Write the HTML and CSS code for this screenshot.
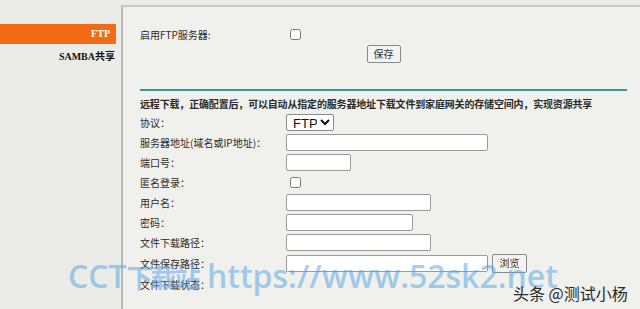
FILE: index.html
```html
<!DOCTYPE html>
<html lang="zh-CN">
<head>
<meta charset="utf-8">
<title>FTP</title>
<link rel="stylesheet" href="styles.css">
</head>
<body>
<div class="page">
  <nav class="sidebar">
    <div class="nav-item active">FTP</div>
    <div class="nav-item">SAMBA共享</div>
  </nav>
  <main class="panel">
    <section class="top">
      <div class="row">
        <span class="label">启用FTP服务器:</span>
        <input type="checkbox" class="check">
      </div>
      <div class="save-row"><button class="btn">保存</button></div>
    </section>
    <hr class="rule">
    <p class="heading">远程下载，正确配置后，可以自动从指定的服务器地址下载文件到家庭网关的存储空间内，实现资源共享</p>
    <div class="form">
      <div class="row"><span class="label">协议：</span><select class="select"><option>FTP</option></select></div>
      <div class="row"><span class="label">服务器地址(域名或IP地址)：</span><input class="text w202" type="text"></div>
      <div class="row"><span class="label">端口号：</span><input class="text w65" type="text"></div>
      <div class="row"><span class="label">匿名登录：</span><input type="checkbox" class="check"></div>
      <div class="row"><span class="label">用户名：</span><input class="text w145" type="text"></div>
      <div class="row"><span class="label">密码：</span><input class="text w127" type="text"></div>
      <div class="row"><span class="label">文件下载路径：</span><input class="text w145" type="text"></div>
      <div class="row tall"><span class="label">文件保存路径：</span><input class="text w202" type="text"><button class="btn browse">浏览</button></div>
      <div class="row"><span class="label">文件下载状态：</span></div>
    </div>
  </main>
</div>
<div class="watermark">CCT<span class="wm-cjk">下载站</span> https://www.52sk2.net</div>
<div class="credit">头条 @测试小杨</div>
</body>
</html>
```

FILE: styles.css
```css
* { box-sizing: border-box; }
html, body { margin: 0; padding: 0; }
body {
  background: #ebebe7;
  font-family: "Noto Sans CJK SC", sans-serif;
  font-size: 10px;
  color: #2a2a2a;
  width: 640px;
  height: 309px;
  overflow: hidden;
  position: relative;
}
.page {
  display: flex;
  height: 309px;
}
.sidebar {
  width: 121px;
  flex: none;
  padding-top: 24px;
}
.nav-item {
  width: 116px;
  height: 20px;
  line-height: 20px;
  text-align: right;
  padding-right: 1px;
  font-family: "Liberation Serif", "Noto Sans CJK SC", serif;
  font-weight: bold;
  font-size: 10px;
  color: #111;
}
.nav-item + .nav-item { margin-top: 3px; }
.nav-item.active {
  background: #f36b12;
  color: #fff;
  padding-right: 6px;
}
.panel {
  flex: 1;
  margin-top: 5px;
  background: #f0f0ec;
  border-left: 2px solid #b9b9b5;
  border-top: 2px solid #c9c9c5;
  padding: 17px 13px 0 17px;
}
.row {
  display: flex;
  align-items: center;
  height: 20px;
}
.row.tall { height: 22px; }
.label {
  width: 146px;
  flex: none;
  white-space: nowrap;
}
.check {
  width: 11px;
  height: 11px;
  margin: 0 0 0 4px;
}
.save-row {
  display: flex;
  justify-content: center;
  margin-top: 1px;
}
.btn {
  font-family: "Noto Sans CJK SC", sans-serif;
  font-size: 10px;
  height: 18px;
  padding: 0 6px;
  background: #f3f3f1;
  border: 1px solid #8a8a8a;
  border-radius: 2px;
  color: #333;
  line-height: 14px;
}
.rule {
  margin: 26px 0 0 0;
  border: 0;
  height: 2px;
  background: #3a9c99;
}
.heading {
  margin: 5px 0 0 0;
  line-height: 16px;
  font-weight: bold;
  white-space: nowrap;
  letter-spacing: -0.17px;
}
.select {
  width: 48px;
  height: 17px;
  font-family: "Liberation Sans", sans-serif;
  font-size: 13px;
  padding: 0 0 0 2px;
  border: 1px solid #8a8a8a;
  border-radius: 2px;
  background: #fff;
  color: #111;
}
.text {
  height: 17px;
  border: 1px solid #9a9a9a;
  border-radius: 2px;
  background: #fff;
}
.w202 { width: 202px; }
.w65 { width: 65px; }
.w145 { width: 145px; }
.w127 { width: 127px; }
.browse {
  margin-left: 4px;
  height: 19px;
  width: 35px;
  padding: 0;
}
.watermark {
  position: absolute;
  left: 68px;
  top: 254px;
  font-family: "Open Sans", "Noto Sans CJK SC", sans-serif;
  font-weight: 600;
  font-size: 32px;
  color: rgba(90, 165, 230, 0.55);
  white-space: nowrap;
  pointer-events: none;
}
.wm-cjk {
  font-size: 26px;
  letter-spacing: -2px;
}
.credit {
  position: absolute;
  left: 513px;
  top: 281px;
  font-size: 16px;
  color: #2a2a2a;
  white-space: nowrap;
}
```
